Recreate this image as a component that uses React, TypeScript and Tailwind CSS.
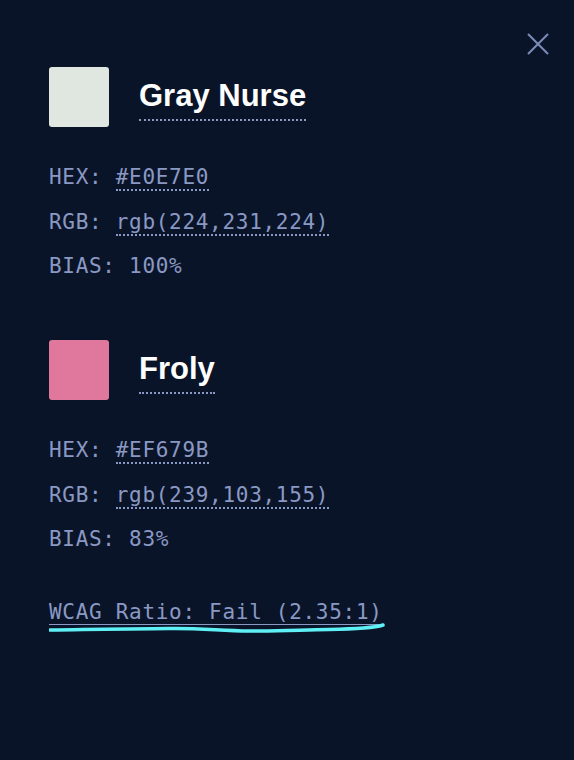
const mono = "font-['DejaVu_Sans_Mono',monospace] text-[21px] tracking-[0.7px] text-[#8a99c4]";

function Swatch({ name, color, hex, rgb, bias }: { name: string; color: string; hex: string; rgb: string; bias: string }) {
  return (
    <div className="flex flex-col">
      <div className="flex items-center gap-[30px]">
        <div className="w-[60px] h-[60px] rounded-[3px]" style={{ backgroundColor: color }} />
        <h2 className="font-['Liberation_Sans',Arial,sans-serif] font-bold text-[31px] text-white leading-none border-b-2 border-dotted border-[#8a99c4] pb-[8px] mt-[6px]">
          {name}
        </h2>
      </div>
      <div className={`${mono} mt-[37px] flex flex-col gap-[18.5px] leading-[26px]`}>
        <div>
          HEX: <span className="border-b-2 border-dotted border-[#8a99c4]">{hex}</span>
        </div>
        <div>
          RGB: <span className="border-b-2 border-dotted border-[#8a99c4]">{rgb}</span>
        </div>
        <div>BIAS: {bias}</div>
      </div>
    </div>
  );
}

export default function App() {
  return (
    <div className="relative w-[574px] h-[760px] bg-[#0a1428] overflow-hidden">
      <button className="absolute top-[32px] right-[24px] w-[24px] h-[24px] text-[#7c8cb8]">
        <svg viewBox="0 0 24 24" width="24" height="24" fill="none" stroke="currentColor" strokeWidth="2">
          <path d="M2 2 L22 22 M22 2 L2 22" />
        </svg>
      </button>
      <div className="pl-[49px] pt-[67px] flex flex-col gap-[61px]">
        <Swatch name="Gray Nurse" color="#E0E7E0" hex="#E0E7E0" rgb="rgb(224,231,224)" bias="100%" />
        <Swatch name="Froly" color="#E0779C" hex="#EF679B" rgb="rgb(239,103,155)" bias="83%" />
        <div className="relative self-start -mt-[16px]">
          <span className={`${mono} underline underline-offset-[5px] decoration-1`}>WCAG Ratio: Fail (2.35:1)</span>
          <svg className="absolute left-0 top-[26px]" width="340" height="14" viewBox="0 0 340 14" fill="none">
            <path
              d="M1 7 C40 6 80 6 120 5.5 C150 5 170 7.5 200 8 C230 8.5 250 7 280 6.5 C310 6 325 5 334 2"
              stroke="#5ff0f5"
              strokeWidth="3.5"
              strokeLinecap="round"
            />
          </svg>
        </div>
      </div>
    </div>
  );
}
